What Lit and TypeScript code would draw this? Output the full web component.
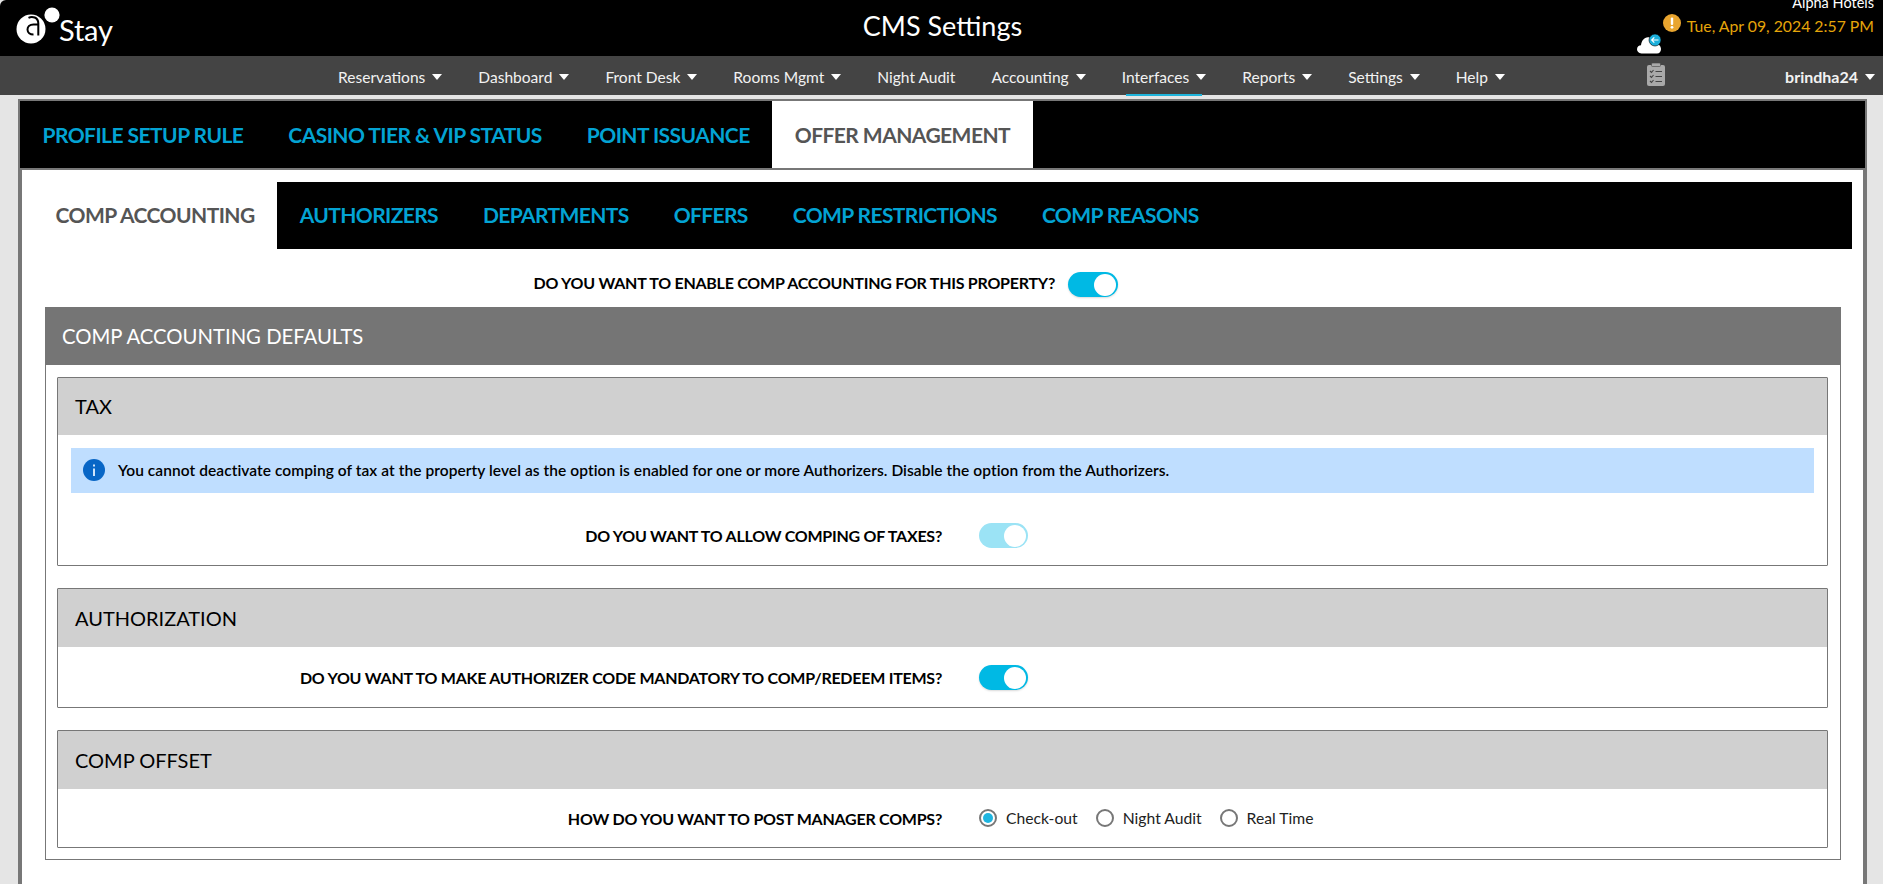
import { LitElement, html, css } from "lit";
import { customElement } from "lit/decorators.js";

const caret = html`<svg class="caret" viewBox="0 0 10 6" width="10" height="6"><path d="M0 0h10L5 6z" fill="#fff"/></svg>`;

@customElement("app-root")
export class AppRoot extends LitElement {
  static styles = css`
    :host { display: flex; flex-direction: column; height: 100vh; overflow: hidden; background: #e5e5e5; font-family: Lato, "Liberation Sans", sans-serif; color: #000; }
    * { box-sizing: border-box; }
    .top { height: 56px; background: #000; position: relative; flex: none; border-top-left-radius: 6px; }
    .logo { position: absolute; left: 15px; top: 6px; }
    .stay { position: absolute; left: 59px; top: 12px; color: #fff; font-size: 29px; line-height: 36px; letter-spacing: -0.2px; }
    .title { position: absolute; left: 2px; right: 0; top: 9px; text-align: center; color: #fff; font-size: 27px; line-height: 34px; }
    .hotel { position: absolute; right: 9px; top: -7px; color: #fff; font-size: 14.5px; line-height: 20px; }
    .date { position: absolute; right: 9px; top: 16px; color: #e5a50a; font-size: 15.8px; line-height: 20px; }
    .warn { position: absolute; left: 1663px; top: 14px; }
    .cloud { position: absolute; left: 1636px; top: 34px; }
    .nav { height: 39px; background: #444; flex: none; position: relative; display: flex; align-items: center; padding-left: 338px; gap: 36px; color: #f2f2f2; font-size: 15.55px; }
    .nav-item { display: flex; align-items: center; gap: 7px; position: relative; height: 39px; padding-top: 2px; }
    .nav-item.active::after { content: ""; position: absolute; left: 4px; right: 4px; bottom: -1px; height: 2px; background: #1fb5dc; }
    .clip { position: absolute; left: 1647px; top: 7px; }
    .user { position: absolute; right: 8px; top: 0; height: 39px; padding-top: 2px; display: flex; align-items: center; gap: 7px; font-weight: 700; font-size: 16px; }
    .strip { height: 4px; flex: none; }
    .outer { flex: 1; min-height: 0; margin: 0 16px 0 18px; border: 2px solid #777; border-bottom: 0; display: flex; flex-direction: column; }
    .tabs { height: 67px; background: #000; display: flex; flex: none; }
    .tab { display: flex; align-items: center; padding: 0 22.5px; font-size: 21px; font-weight: 700; color: #03a3d3; letter-spacing: -0.55px; }
    .tab.on { background: #fff; color: #555; }
    .inner { flex: 1; min-height: 0; background: #fff; border: 2px solid #777; border-bottom: 0; padding: 12px 11px 0; }
    .subtabs { height: 67px; background: #000; display: flex; }
    .subtabs .tab { padding-bottom: 2px; letter-spacing: -0.62px; }
    .subtabs .tab:first-child { background: #fff; color: #555; letter-spacing: -0.55px; }
    .enable { height: 58px; padding-top: 23px; display: flex; align-items: flex-start; }
    .enable .lab { width: 1035px; padding-right: 13px; text-align: right; line-height: 21px; }
    .lab { font-size: 16px; font-weight: 700; letter-spacing: -0.25px; }
    .toggle { width: 50px; height: 25px; border-radius: 13px; background: #00b9e4; position: relative; flex: none; box-shadow: 0 1px 2px rgba(0,0,0,.15); }
    .toggle::after { content: ""; position: absolute; right: 2px; top: 1.5px; width: 22px; height: 22px; border-radius: 50%; background: #fff; }
    .toggle.off { background: #9be3f5; box-shadow: none; }
    .row .toggle { width: 49px; }
    .panel { margin: 0 11px 0 12px; border: 1px solid #777; border-top: 0; padding-bottom: 11px; }
    .phead { height: 58px; background: #757575; margin: 0 -1px; color: #fff; font-size: 20.3px; display: flex; align-items: center; padding-left: 17px; }
    .card { margin: 12px 12px 0 11px; border: 1px solid #777; border-radius: 1px; }
    .card + .card { margin-top: 22px; }
    .chead { height: 58px; background: #d0d0d0; font-size: 20px; display: flex; align-items: center; padding-left: 17px; }
    .chead.short { height: 57px; padding-bottom: 1px; }
    .alert { margin: 13px 13px 0; height: 45px; background: #bfdeff; display: flex; align-items: center; padding-left: 12px; gap: 13px; font-size: 15.5px; font-weight: 600; letter-spacing: 0.07px; padding-bottom: 1px; }
    .row { display: flex; align-items: center; height: 25px; }
    .row .lab { width: 921px; padding-right: 37px; text-align: right; }
    .r1 { margin: 30px 0 17px; }
    .r2 { margin: 18px 0 17px; }
    .r3 { margin: 20px 0 20px; height: 18px; }
    .radio { display: flex; align-items: center; gap: 9px; margin-right: 18px; font-size: 15.7px; color: #222; }
    .dot { width: 18px; height: 18px; border-radius: 50%; border: 2px solid #777; display: flex; align-items: center; justify-content: center; flex: none; }
    .dot.on::after { content: ""; width: 10px; height: 10px; border-radius: 50%; background: #1fb5e0; }
  `;

  render() {
    const nav: [string, boolean, boolean][] = [
      ["Reservations", true, false], ["Dashboard", true, false], ["Front Desk", true, false],
      ["Rooms Mgmt", true, false], ["Night Audit", false, false], ["Accounting", true, false],
      ["Interfaces", true, true], ["Reports", true, false], ["Settings", true, false], ["Help", true, false],
    ];
    return html`
      <div class="top">
        <svg class="logo" width="46" height="40" viewBox="0 0 46 40">
          <circle cx="16" cy="23" r="14.5" fill="#fff"/>
          <circle cx="37" cy="9" r="7.6" fill="#fff"/>
          <path d="M13.500 11.800C17 10 23.300 11 23.300 17.500V29.500" fill="none" stroke="#000" stroke-width="2"/>
          <path d="M23 18.500H18.500C14.500 18.500 12.500 21 12.500 23.500C12.500 26.500 15 28.500 18.500 28.500" fill="none" stroke="#000" stroke-width="2"/>
        </svg>
        <div class="stay">Stay</div>
        <div class="title">CMS Settings</div>
        <div class="hotel">Alpha Hotels</div>
        <svg class="warn" width="18" height="18" viewBox="0 0 18 18"><circle cx="9" cy="9" r="9" fill="#e9a52f"/><rect x="7.800" y="3.500" width="2.400" height="7.500" rx="1" fill="#fff"/><circle cx="9" cy="13.300" r="1.400" fill="#fff"/></svg>
        <div class="date">Tue, Apr 09, 2024 2:57 PM</div>
        <svg class="cloud" width="30" height="22" viewBox="0 0 30 22">
          <path d="M5.500 19.500C2.500 19.500 1 17.300 1 15.300C1 12.800 3 11.300 5 11.300C5.500 7 8 3.300 12 3.300C15 3.300 18 6 19 9C22 9 25 12 25 15C25 17.500 23.500 19.500 21 19.500Z" fill="#fff"/>
          <circle cx="19" cy="6" r="6" fill="#1cb0dc" stroke="#000" stroke-width=".6"/>
          <path d="M22.500 6H15.800M18.300 3.400L15.700 6L18.300 8.600" fill="none" stroke="#fff" stroke-width="1.200"/>
        </svg>
      </div>
      <div class="nav">
        ${nav.map(([t, c, a]) => html`<div class="nav-item ${a ? "active" : ""}">${t}${c ? caret : ""}</div>`)}
        <svg class="clip" width="18" height="23" viewBox="0 0 18 23">
          <rect x="0" y="2" width="18" height="21" rx="2" fill="#a9a9a9"/>
          <rect x="4.500" y="0" width="9" height="3.500" rx="1" fill="#a9a9a9" stroke="#444" stroke-width=".6"/>
          <path d="M3 8l1.500 1.500L6.500 7M3 13l1.500 1.500L6.500 12M3 18l1.500 1.500L6.500 17M8.500 8.500h6.500M8.500 13.500h6.500M8.500 18.500h6.500" fill="none" stroke="#444" stroke-width="1.100"/>
        </svg>
        <div class="user">brindha24${caret}</div>
      </div>
      <div class="strip"></div>
      <div class="outer">
        <div class="tabs">
          <div class="tab">PROFILE SETUP RULE</div>
          <div class="tab">CASINO TIER &amp; VIP STATUS</div>
          <div class="tab">POINT ISSUANCE</div>
          <div class="tab on">OFFER MANAGEMENT</div>
        </div>
        <div class="inner">
          <div class="subtabs">
            <div class="tab">COMP ACCOUNTING</div>
            <div class="tab">AUTHORIZERS</div>
            <div class="tab">DEPARTMENTS</div>
            <div class="tab">OFFERS</div>
            <div class="tab">COMP RESTRICTIONS</div>
            <div class="tab">COMP REASONS</div>
          </div>
          <div class="enable"><div class="lab">DO YOU WANT TO ENABLE COMP ACCOUNTING FOR THIS PROPERTY?</div><div class="toggle"></div></div>
          <div class="panel">
            <div class="phead">COMP ACCOUNTING DEFAULTS</div>
            <div class="card">
              <div class="chead short">TAX</div>
              <div class="alert">
                <svg width="22" height="22" viewBox="0 0 22 22"><circle cx="11" cy="11" r="11" fill="#0866c6"/><rect x="10" y="9.500" width="2" height="7.500" fill="#cfe4fa"/><rect x="10" y="5.500" width="2" height="2" fill="#cfe4fa"/></svg>
                You cannot deactivate comping of tax at the property level as the option is enabled for one or more Authorizers. Disable the option from the Authorizers.
              </div>
              <div class="row r1"><div class="lab">DO YOU WANT TO ALLOW COMPING OF TAXES?</div><div class="toggle off"></div></div>
            </div>
            <div class="card">
              <div class="chead">AUTHORIZATION</div>
              <div class="row r2"><div class="lab">DO YOU WANT TO MAKE AUTHORIZER CODE MANDATORY TO COMP/REDEEM ITEMS?</div><div class="toggle"></div></div>
            </div>
            <div class="card">
              <div class="chead">COMP OFFSET</div>
              <div class="row r3"><div class="lab">HOW DO YOU WANT TO POST MANAGER COMPS?</div>
                <div class="radio"><span class="dot on"></span>Check-out</div>
                <div class="radio"><span class="dot"></span>Night Audit</div>
                <div class="radio"><span class="dot"></span>Real Time</div>
              </div>
            </div>
          </div>
        </div>
      </div>
    `;
  }
}
